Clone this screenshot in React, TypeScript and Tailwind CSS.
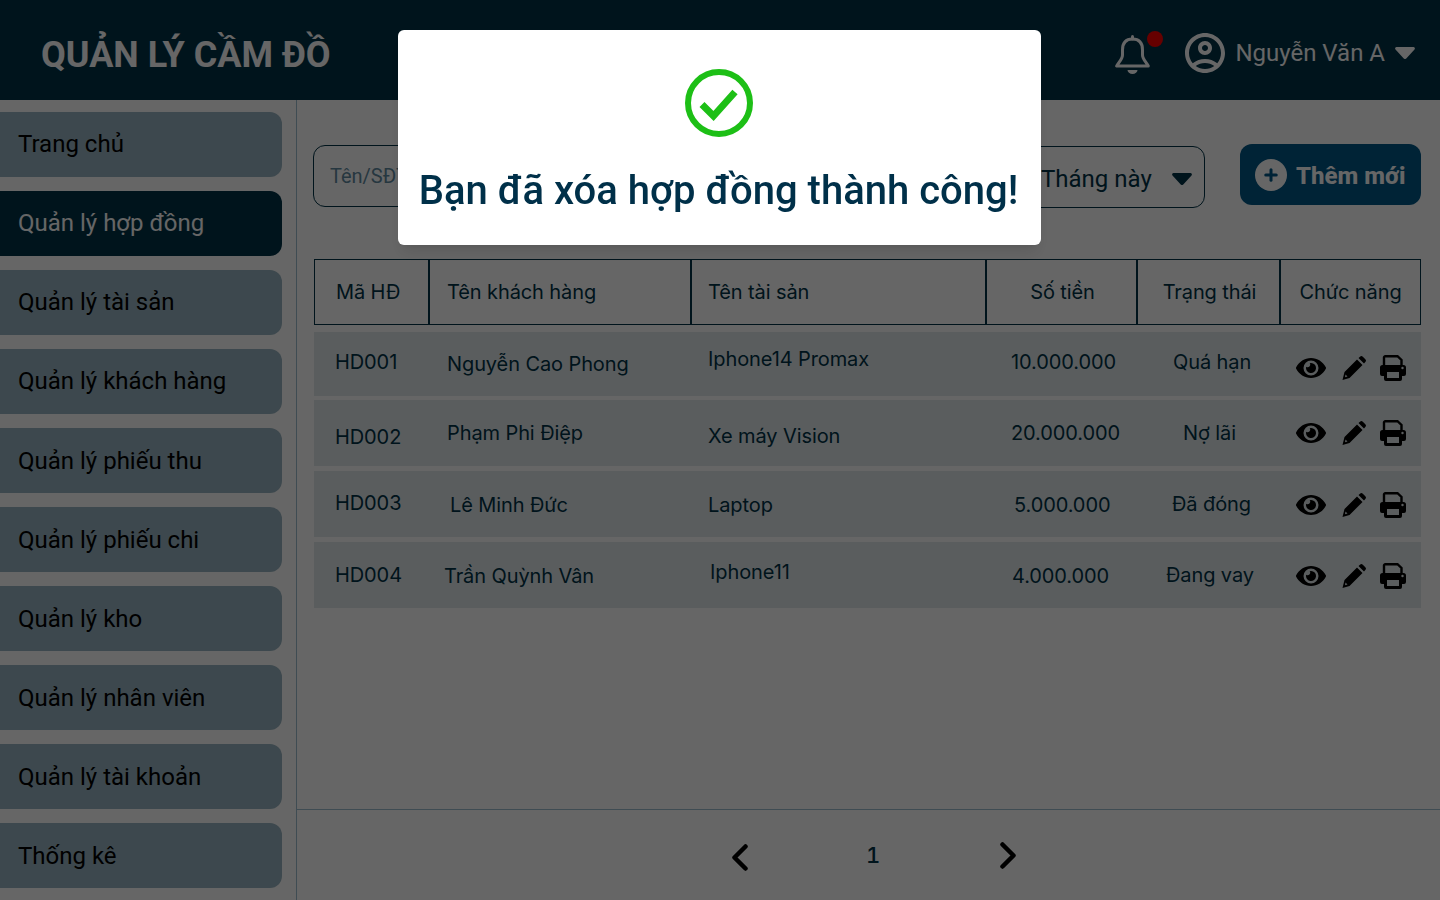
import React from "react";
import { FaEye } from "react-icons/fa";
import { MdOutlineAccountCircle } from "react-icons/md";
import { Plus } from "lucide-react";

const menu = [
  "Trang chủ",
  "Quản lý hợp đồng",
  "Quản lý tài sản",
  "Quản lý khách hàng",
  "Quản lý phiếu thu",
  "Quản lý phiếu chi",
  "Quản lý kho",
  "Quản lý nhân viên",
  "Quản lý tài khoản",
  "Thống kê",
];

const rowColumns = "grid grid-cols-[115px_262px_295px_151px_143px_141px]";

const rows = [
  {
    box: "mt-[7px] h-[64px]",
    icons: "pt-2",
    cells: [
      { text: "HD001", cls: "pl-[21px] pb-1" },
      { text: "Nguyễn Cao Phong", cls: "pl-[18px]" },
      { text: "Iphone14 Promax", cls: "pl-[17px] pb-[10px]" },
      { text: "10.000.000", cls: "pl-[25px] pb-1" },
      { text: "Quá hạn", cls: "pl-9 pb-1" },
    ],
  },
  {
    box: "mt-1 h-[66px]",
    icons: "",
    cells: [
      { text: "HD002", cls: "pl-[21px] pt-2" },
      { text: "Phạm Phi Điệp", cls: "pl-[18px]" },
      { text: "Xe máy Vision", cls: "pl-[17px] pt-[6px]" },
      { text: "20.000.000", cls: "pl-[25px]" },
      { text: "Nợ lãi", cls: "pl-[46px]" },
    ],
  },
  {
    box: "mt-[5px] h-[66px]",
    icons: "pt-[2px]",
    cells: [
      { text: "HD003", cls: "pl-[21px] pb-[2px]" },
      { text: "Lê Minh Đức", cls: "pl-[21px] pt-[2px]" },
      { text: "Laptop", cls: "pl-[17px] pt-[2px]" },
      { text: "5.000.000", cls: "pl-[28px] pt-[2px]" },
      { text: "Đã đóng", cls: "pl-[35px]" },
    ],
  },
  {
    box: "mt-[5px] h-[66px]",
    icons: "pt-[2px]",
    cells: [
      { text: "HD004", cls: "pl-[21px]" },
      { text: "Trần Quỳnh Vân", cls: "pl-[15px] pt-[2px]" },
      { text: "Iphone11", cls: "pl-[19px] pb-[6px]" },
      { text: "4.000.000", cls: "pl-[26px] pt-[2px]" },
      { text: "Đang vay", cls: "pl-[29px]" },
    ],
  },
];

const Caret = ({ className }: { className: string }) => (
  <svg width="20" height="12" viewBox="0 0 20 12" fill="currentColor" className={className}>
    <path d="M1.5 0h17a1.5 1.5 0 0 1 1 2.5l-8 8.7a2 2 0 0 1-3 0L.5 2.5A1.5 1.5 0 0 1 1.5 0z" />
  </svg>
);

const Bell = () => (
  <svg width="35" height="39" viewBox="0 0 35 39" fill="none" stroke="white" strokeWidth="3" strokeLinejoin="round" strokeLinecap="round">
    <path d="M17.5 1.5V4" />
    <path d="M17.5 4C10 4 7.5 9 7.5 15v5C7.5 24 4 27 1.7 31h31.6C31 27 27.5 24 27.5 20v-5C27.5 9 25 4 17.5 4z" />
    <path d="M12.5 35h10a5 4 0 0 1-10 0z" fill="white" stroke="none" />
  </svg>
);

const Pencil = () => (
  <svg width="24" height="24" viewBox="0 0 24 24" fill="black" className="ml-4">
    <path fillRule="evenodd" d="M15 3.5L20.5 9 7.5 22 .5 24l2-8zM3.5 18.5l2 2-2.5.7z" />
    <path d="M16.5 2L18 .7a2 2 0 0 1 2.8 0l2.5 2.5a2 2 0 0 1 0 2.8L22 7.5z" />
  </svg>
);

const Printer = () => (
  <svg width="26" height="26" viewBox="0 0 26 26" className="ml-[14px]">
    <path d="M4 10V3a1.5 1.5 0 0 1 1.5-1.8h12L21.5 5v5" fill="none" stroke="black" strokeWidth="2.4" />
    <path
      fill="black"
      fillRule="evenodd"
      d="M2.5 10h21a2.5 2.5 0 0 1 2.5 2.5V19a2 2 0 0 1-2 2h-2v3a2 2 0 0 1-2 2H6a2 2 0 0 1-2-2v-3H2a2 2 0 0 1-2-2v-6.5A2.5 2.5 0 0 1 2.5 10zM7 17v6h12v-6zM22.5 11.8a1.2 1.2 0 1 0 0 2.4 1.2 1.2 0 0 0 0-2.4z"
    />
  </svg>
);

const Header = () => (
  <header className="flex h-[100px] items-center justify-between bg-[#003246] pl-[41px] pr-[25px] pt-[6px]">
    <h1 className="pt-1 font-['Roboto',sans-serif] text-[36px] font-bold text-white">QUẢN LÝ CẦM ĐỒ</h1>
    <div className="flex items-center">
      <div className="relative mr-[31px] mt-[2px]">
        <Bell />
        <span className="absolute right-[-13px] top-[-4px] h-4 w-4 rounded-full bg-[#ff0000]" />
      </div>
      <MdOutlineAccountCircle className="mr-[6px] h-[48px] w-[48px] text-white" />
      <span className="mr-[10px] font-['Roboto',sans-serif] text-[24px] text-white">Nguyễn Văn A</span>
      <Caret className="text-white" />
    </div>
  </header>
);

const Sidebar = () => (
  <aside className="flex w-[297px] shrink-0 flex-col gap-[14px] border-r border-[#9ebed0] pr-[14px] pt-3">
    {menu.map((item, i) => (
      <div
        key={item}
        className={`flex h-[65px] items-center rounded-r-xl pl-[18px] font-['Roboto',sans-serif] text-[24px] ${
          i === 1 ? "bg-[#003246] text-white" : "bg-[#9ab5c2] text-black"
        } ${i < 4 ? "pb-[2px]" : ""}`}
      >
        {item}
      </div>
    ))}
  </aside>
);

const Filters = () => (
  <div className="flex items-start pl-4 pr-[19px] pt-[44px]">
    <div className="mt-[1px] flex h-[62px] w-[400px] items-center rounded-xl border border-[#003246] pb-px pl-4 font-['Roboto',sans-serif] text-[20px] text-[#5f8aa0]">
      Tên/SĐT
    </div>
    <div className="ml-[287px] mt-[2px] flex h-[62px] w-[205px] items-center rounded-xl border border-[#003246] pl-[40px] pt-1 font-['Roboto',sans-serif] text-[24px] text-[#003246]">
      Tháng này
      <Caret className="ml-[20px] text-[#003246]" />
    </div>
    <button className="ml-[35px] flex h-[61px] w-[181px] items-center rounded-xl bg-[#005787] pl-[15px] pt-[3px] font-['Roboto',sans-serif] text-[24px] font-extrabold text-white">
      <span className="mb-[3px] mr-[9px] flex h-8 w-8 items-center justify-center rounded-full bg-white">
        <Plus className="h-[18px] w-[18px] text-[#005787]" strokeWidth={4} />
      </span>
      Thêm mới
    </button>
  </div>
);

const Table = () => (
  <div className="mt-[51px] pl-[17px] pr-[19px] font-['Inter',sans-serif] text-[20px] tracking-[-0.1px] text-[#003246]">
    <div className="grid h-[66px] grid-cols-[115px_262px_295px_151px_143px_139px] border border-[#003246]">
      <div className="flex items-center border-r-2 border-[#003246] pl-[21px]">Mã HĐ</div>
      <div className="flex items-center border-r-2 border-[#003246] pl-[17px]">Tên khách hàng</div>
      <div className="flex items-center border-r-2 border-[#003246] pl-4">Tên tài sản</div>
      <div className="flex items-center justify-center border-r-2 border-[#003246] pl-[2px]">Số tiền</div>
      <div className="flex items-center justify-center border-r-2 border-[#003246] pl-[2px]">Trạng thái</div>
      <div className="flex items-center justify-center">Chức năng</div>
    </div>
    {rows.map((row) => (
      <div key={row.cells[0].text} className={`${rowColumns} ${row.box} bg-[#e2e9ec]`}>
        {row.cells.map((cell) => (
          <div key={cell.text} className={`flex items-center whitespace-nowrap ${cell.cls}`}>
            {cell.text}
          </div>
        ))}
        <div className={`flex items-center pl-4 ${row.icons}`}>
          <FaEye className="h-[30px] w-[30px] text-black" />
          <Pencil />
          <Printer />
        </div>
      </div>
    ))}
  </div>
);

const Pagination = () => (
  <div className="mt-auto flex h-[91px] items-center border-t border-[#9ebed0] pl-[435px]">
    <svg width="16" height="27" viewBox="0 0 16 27" fill="none" stroke="black" strokeWidth="4.5" strokeLinecap="round" strokeLinejoin="round" className="mt-1">
      <path d="M13.5 2.5L2.5 13.5l11 11" />
    </svg>
    <span className="ml-[118px] font-['Inter',sans-serif] text-[22px] font-medium tabular-nums text-[#003246]">1</span>
    <svg width="16" height="27" viewBox="0 0 16 27" fill="none" stroke="black" strokeWidth="4.5" strokeLinecap="round" strokeLinejoin="round" className="ml-[120px]">
      <path d="M2.5 2.5l11 11-11 11" />
    </svg>
  </div>
);

const SuccessModal = () => (
  <div className="fixed inset-0 bg-black/60">
    <div className="ml-[398px] mt-[30px] flex h-[215px] w-[643px] flex-col items-center rounded-md bg-white pr-[2px] pt-[39px] shadow-lg">
      <svg width="68" height="68" viewBox="0 0 68 68" fill="none" stroke="#1dbf16">
        <circle cx="34" cy="34" r="31" strokeWidth="6" />
        <path d="M17 35.5L28.5 47 50 23" strokeWidth="7" />
      </svg>
      <p className="mt-[30px] whitespace-nowrap font-['Roboto',sans-serif] text-[40px] font-medium leading-[48px] text-[#003049]">
        Bạn đã xóa hợp đồng thành công!
      </p>
    </div>
  </div>
);

export default function App() {
  return (
    <div className="flex h-[900px] flex-col overflow-hidden bg-white">
      <Header />
      <div className="flex min-h-0 flex-1">
        <Sidebar />
        <main className="flex min-w-0 flex-1 flex-col">
          <Filters />
          <Table />
          <Pagination />
        </main>
      </div>
      <SuccessModal />
    </div>
  );
}
